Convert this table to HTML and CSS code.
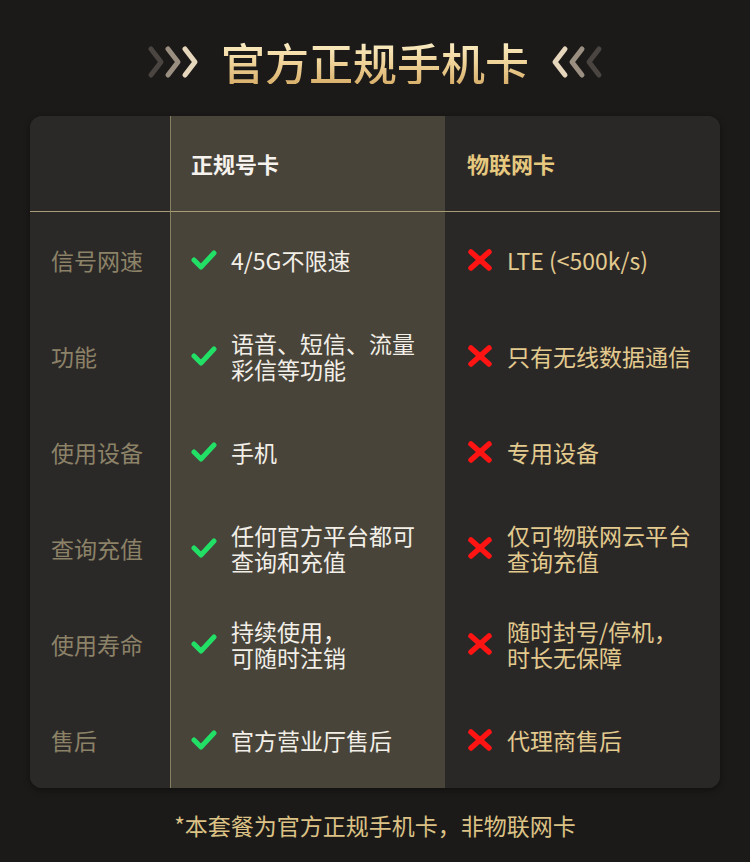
FILE: index.html
```html
<!DOCTYPE html>
<html lang="zh-CN">
<head>
<meta charset="utf-8">
<link rel="stylesheet" href="styles.css">
</head>
<body>
<div class="page">
  <header class="title">
    <svg class="chev" width="54" height="34" viewBox="0 0 54 34">
      <polyline points="4,4 14,17 4,30" stroke="#4a4540" />
      <polyline points="21,4 31,17 21,30" stroke="#9a8f80" />
      <polyline points="38,4 48,17 38,30" stroke="#e6d6bc" />
    </svg>
    <h1>官方正规手机卡</h1>
    <svg class="chev" width="54" height="34" viewBox="0 0 54 34">
      <polyline points="16,4 6,17 16,30" stroke="#e6d6bc" />
      <polyline points="33,4 23,17 33,30" stroke="#9a8f80" />
      <polyline points="50,4 40,17 50,30" stroke="#4a4540" />
    </svg>
  </header>

  <div class="table">
    <div class="cell head label"></div>
    <div class="cell head mid"><span class="h-mid">正规号卡</span></div>
    <div class="cell head right"><span class="h-right">物联网卡</span></div>

    <div class="cell label">信号网速</div>
    <div class="cell mid"><svg class="ok" viewBox="0 0 26 20"><polyline points="3,10 10,17 23,3"/></svg><span>4/5G不限速</span></div>
    <div class="cell right"><svg class="no" viewBox="0 0 26 24"><path d="M4,4 L22,20 M22,4 L4,20"/></svg><span>LTE (&lt;500k/s)</span></div>

    <div class="cell label">功能</div>
    <div class="cell mid"><svg class="ok" viewBox="0 0 26 20"><polyline points="3,10 10,17 23,3"/></svg><span>语音、短信、流量<br>彩信等功能</span></div>
    <div class="cell right"><svg class="no" viewBox="0 0 26 24"><path d="M4,4 L22,20 M22,4 L4,20"/></svg><span>只有无线数据通信</span></div>

    <div class="cell label">使用设备</div>
    <div class="cell mid"><svg class="ok" viewBox="0 0 26 20"><polyline points="3,10 10,17 23,3"/></svg><span>手机</span></div>
    <div class="cell right"><svg class="no" viewBox="0 0 26 24"><path d="M4,4 L22,20 M22,4 L4,20"/></svg><span>专用设备</span></div>

    <div class="cell label">查询充值</div>
    <div class="cell mid"><svg class="ok" viewBox="0 0 26 20"><polyline points="3,10 10,17 23,3"/></svg><span>任何官方平台都可<br>查询和充值</span></div>
    <div class="cell right"><svg class="no" viewBox="0 0 26 24"><path d="M4,4 L22,20 M22,4 L4,20"/></svg><span>仅可物联网云平台<br>查询充值</span></div>

    <div class="cell label">使用寿命</div>
    <div class="cell mid"><svg class="ok" viewBox="0 0 26 20"><polyline points="3,10 10,17 23,3"/></svg><span>持续使用，<br>可随时注销</span></div>
    <div class="cell right"><svg class="no" viewBox="0 0 26 24"><path d="M4,4 L22,20 M22,4 L4,20"/></svg><span>随时封号/停机，<br>时长无保障</span></div>

    <div class="cell label">售后</div>
    <div class="cell mid"><svg class="ok" viewBox="0 0 26 20"><polyline points="3,10 10,17 23,3"/></svg><span>官方营业厅售后</span></div>
    <div class="cell right"><svg class="no" viewBox="0 0 26 24"><path d="M4,4 L22,20 M22,4 L4,20"/></svg><span>代理商售后</span></div>
  </div>

  <p class="note">*本套餐为官方正规手机卡，非物联网卡</p>
</div>
</body>
</html>
```

FILE: styles.css
```css
* { box-sizing: border-box; }
html, body {
  margin: 0;
  padding: 0;
  background: #1b1a19;
}
body {
  font-family: "Noto Sans CJK SC", "Noto Sans", sans-serif;
  width: 750px;
  height: 862px;
  overflow: hidden;
}
.page {
  display: flex;
  flex-direction: column;
  align-items: center;
}
.title {
  height: 116px;
  display: flex;
  align-items: center;
  justify-content: center;
  gap: 20px;
  padding-top: 8px;
}
.title h1 {
  margin: 0;
  font-size: 44px;
  font-weight: 500;
  line-height: 1;
  background: linear-gradient(180deg, #fbeec8 0%, #f0d49a 50%, #d9b06c 100%);
  -webkit-background-clip: text;
  background-clip: text;
  color: transparent;
}
.chev polyline {
  fill: none;
  stroke-width: 5;
  stroke-linecap: round;
  stroke-linejoin: round;
}
.table {
  width: 690px;
  display: grid;
  grid-template-columns: 140px 275px 275px;
  grid-auto-rows: 96px;
  border-radius: 12px;
  overflow: hidden;
  background: #2b2927;
  box-shadow: 0 2px 6px rgba(0,0,0,0.4);
}
.cell {
  display: flex;
  align-items: center;
  font-size: 23px;
  line-height: 26px;
}
.cell.head {
  border-bottom: 1px solid #a89c74;
}
.label {
  padding-left: 21px;
  color: #8c8268;
  background: #2b2927;
}
.mid {
  padding-left: 20px;
  gap: 14px;
  color: #f2efe8;
  background: #48443a;
  border-left: 1px solid #85805f;
}
.right {
  padding-left: 22px;
  gap: 14px;
  color: #e3ca8e;
  background: #2a2827;
}
.h-mid {
  font-weight: 700;
  font-size: 22px;
  color: #f6f3ee;
  margin-top: -2px;
}
.h-right {
  font-weight: 700;
  font-size: 22px;
  color: #e6c97f;
  margin-top: -2px;
}
.ok {
  width: 26px;
  height: 20px;
  flex: none;
}
.ok polyline {
  fill: none;
  stroke: #22df66;
  stroke-width: 5;
  stroke-linecap: round;
  stroke-linejoin: round;
}
.no {
  width: 26px;
  height: 24px;
  flex: none;
}
.no path {
  fill: none;
  stroke: #ff1414;
  stroke-width: 5.5;
  stroke-linecap: round;
}
.note {
  margin: 24px 0 0;
  font-size: 23px;
  color: #dcc285;
  line-height: 26px;
}
```
